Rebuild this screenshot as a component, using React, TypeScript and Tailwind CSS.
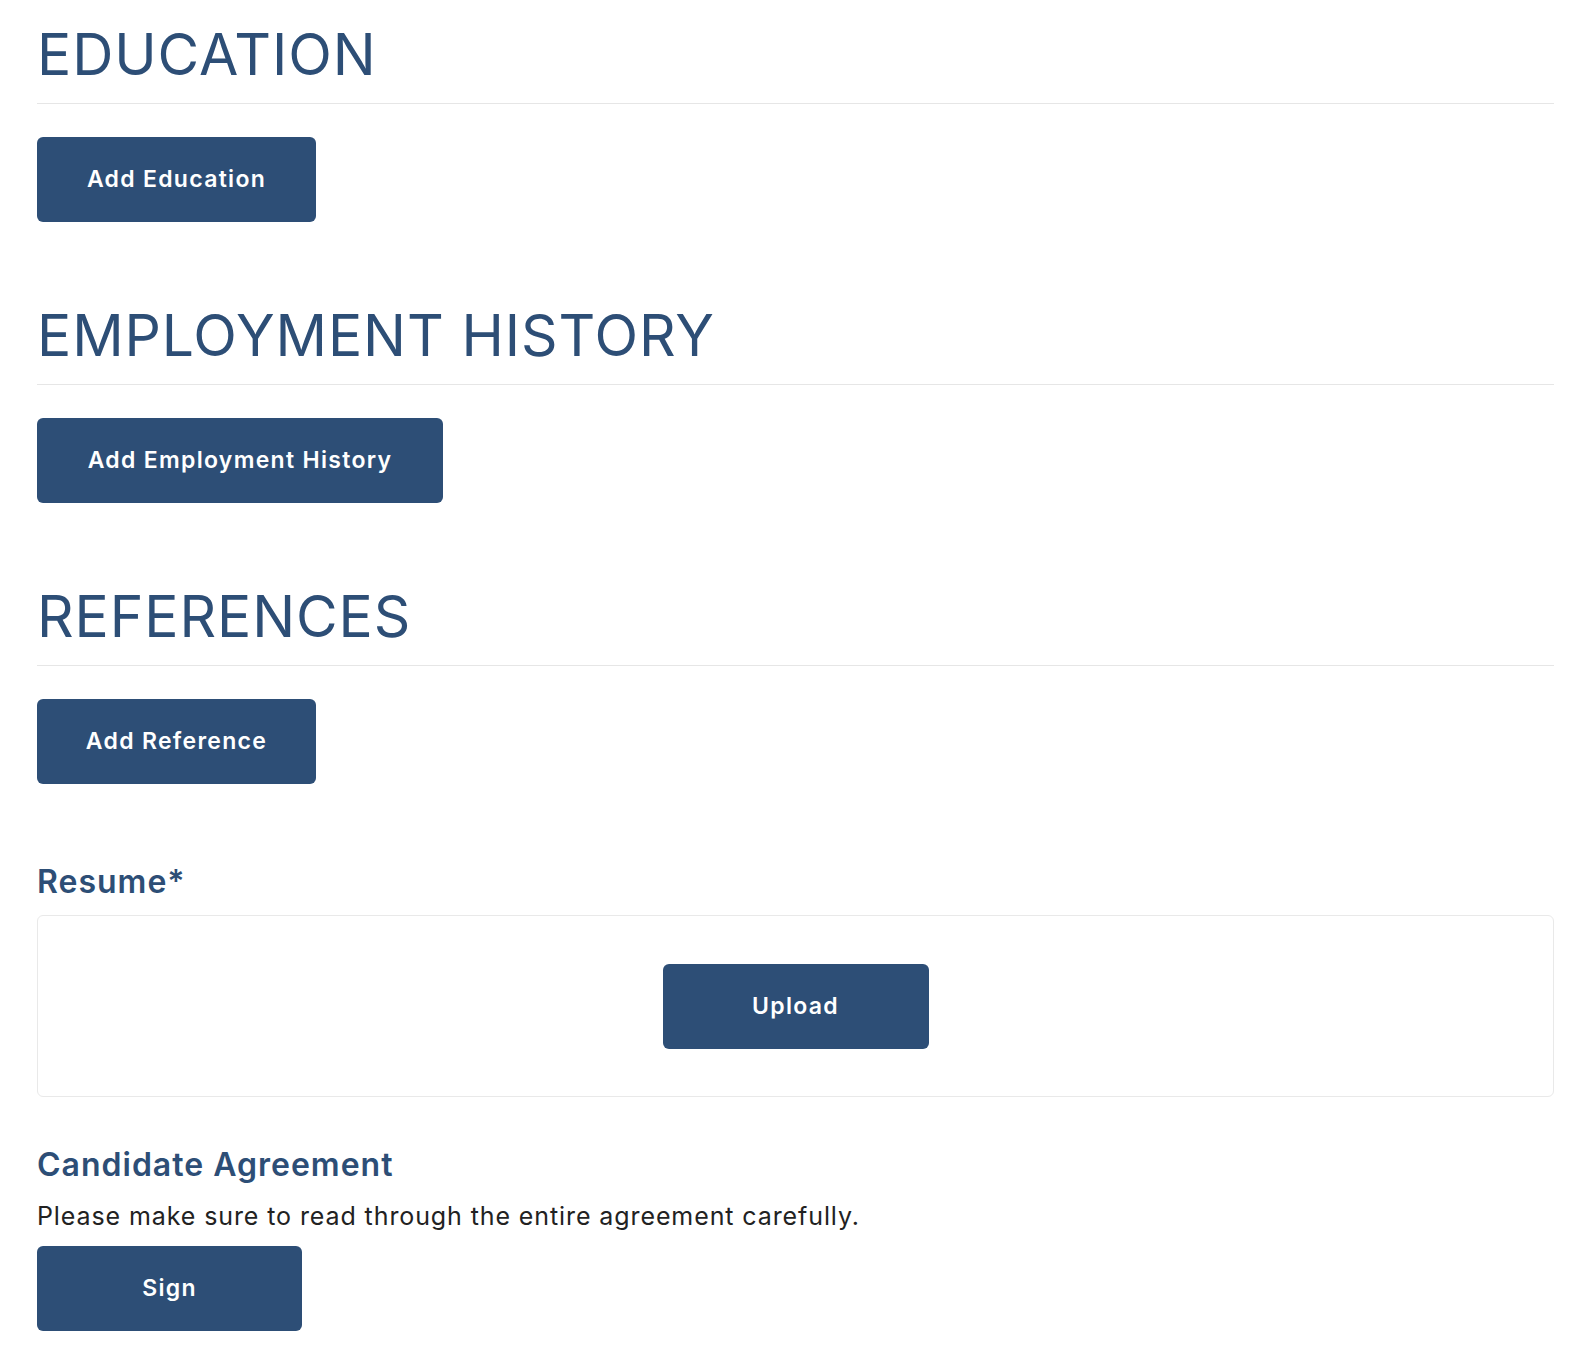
import React from "react";

const font = { fontFamily: "Inter, 'Noto Sans', sans-serif" };

function Btn({ label, w }: { label: string; w: string }) {
  return (
    <button
      className={`h-[85px] ${w} rounded-[6px] bg-[#2d4e76] text-white text-[23px] font-semibold tracking-[1.3px] flex items-center justify-center`}
    >
      {label}
    </button>
  );
}

function Section({ title, btn, w }: { title: string; btn: string; w: string }) {
  return (
    <div className="flex flex-col">
      <h2 className="text-[57px] leading-[70px] font-normal text-[#2d4e76] tracking-[0.9px] pb-[13px] border-b border-[#e6e6e6]">
        {title}
      </h2>
      <div className="mt-[33px]">
        <Btn label={btn} w={w} />
      </div>
    </div>
  );
}

export default function App() {
  return (
    <div className="min-h-[1370px] bg-white px-[37px] pt-[20px] pr-[36px]" style={font}>
      <div className="flex flex-col gap-[79px]">
        <Section title="EDUCATION" btn="Add Education" w="w-[279px]" />
        <Section title="EMPLOYMENT HISTORY" btn="Add Employment History" w="w-[406px]" />
        <Section title="REFERENCES" btn="Add Reference" w="w-[279px]" />
      </div>
      <div className="mt-[78px] text-[32px] leading-[40px] font-semibold tracking-[1px] text-[#2d4e76]">Resume*</div>
      <div className="mt-[13px] h-[182px] border border-[#e9e9e9] rounded-[6px] flex items-center justify-center">
        <Btn label="Upload" w="w-[266px]" />
      </div>
      <div className="mt-[48px] text-[32px] leading-[40px] font-semibold tracking-[1px] text-[#2d4e76]">
        Candidate Agreement
      </div>
      <p className="mt-[15px] text-[25px] leading-[32px] tracking-[0.9px] text-[#222]">
        Please make sure to read through the entire agreement carefully.
      </p>
      <div className="mt-[14px]">
        <Btn label="Sign" w="w-[265px]" />
      </div>
    </div>
  );
}
